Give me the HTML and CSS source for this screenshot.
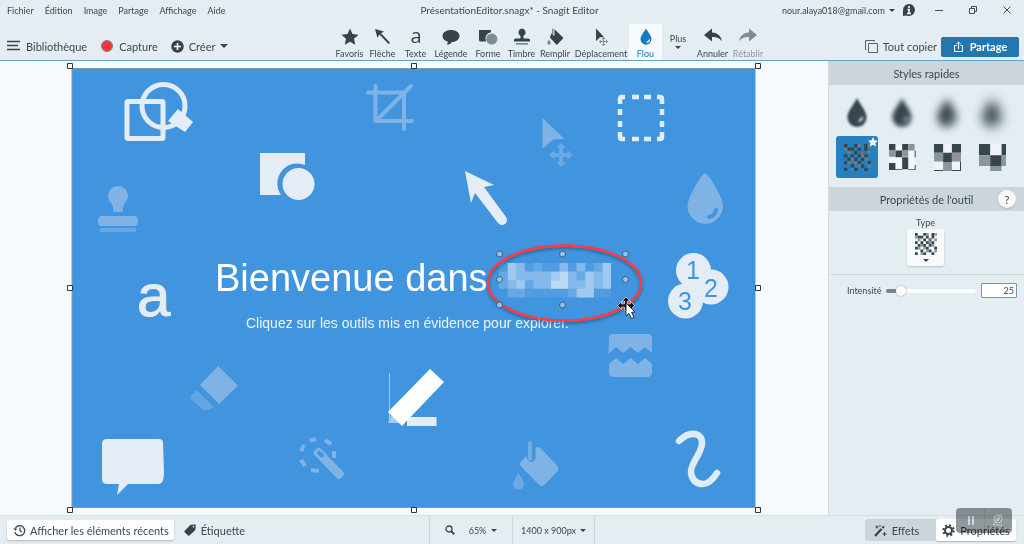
FILE: index.html
```html
<!DOCTYPE html>
<html lang="fr">
<head>
<meta charset="utf-8">
<title>PrésentationEditor.snagx* - Snagit Editor</title>
<link rel="stylesheet" href="styles.css">
</head>
<body>
<header class="header">
  <div class="titlebar">
    <nav class="menu">
      <button>Fichier</button><button>Édition</button><button>Image</button><button>Partage</button><button>Affichage</button><button>Aide</button>
    </nav>
    <div class="title">PrésentationEditor.snagx* - Snagit Editor</div>
    <div class="window-tools">
      <button class="account">nour.alaya018@gmail.com <span class="caret small-caret"></span></button>
      <button class="win" aria-label="Informations"><svg width="14" height="14" viewBox="0 0 14 14"><path d="M7 1a6 6 0 1 1-2.500 11.500L1 13V7A6 6 0 0 1 7 1z" fill="#37434b"/><path d="M7 3v2M5.500 6.500H7V10M5 10.500h4" stroke="#fff" stroke-width="1.600" fill="none"/></svg></button>
      <button class="win" aria-label="Réduire"><svg width="10" height="10" viewBox="0 0 10 10"><path d="M1 5.500h8" stroke="#414d55"/></svg></button>
      <button class="win" aria-label="Restaurer"><svg width="10" height="10" viewBox="0 0 10 10" fill="none" stroke="#414d55"><path d="M1.500 3.500h5v5h-5zM3.500 3V1.500h5v5H7"/></svg></button>
      <button class="win" aria-label="Fermer"><svg width="10" height="10" viewBox="0 0 10 10"><path d="M1.500 1.500l7 7M8.500 1.500l-7 7" stroke="#414d55"/></svg></button>
    </div>
  </div>
  <div class="toolbar">
    <div class="group">
      <button class="action"><svg width="14" height="12" viewBox="0 0 14 12"><path d="M0 1.500h13M0 5.500h11M0 9.500h13" stroke="#37434b" stroke-width="1.500"/></svg>Bibliothèque</button>
      <button class="action"><svg width="14" height="14" viewBox="0 0 14 14"><circle cx="7" cy="7" r="5.500" fill="#fb3438" stroke="#77838a"/></svg>Capture</button>
      <button class="action"><svg width="13" height="13" viewBox="0 0 13 13"><circle cx="6.500" cy="6.500" r="6.200" fill="#37434b"/><path d="M6.500 3v7M3 6.500h7" stroke="#fff" stroke-width="1.600"/></svg>Créer <span class="caret"></span></button>
    </div>
    <div class="tools">
      <button class="tool"><svg viewBox="0 0 22 20"><path d="M11 1.500l2.500 5.600 6.100.6-4.600 4.100 1.300 6L11 14.700l-5.300 3.100 1.300-6L2.400 7.700l6.100-.6z"/></svg>Favoris</button>
      <button class="tool"><svg viewBox="0 0 22 20"><path d="M3 2l9 2.500-3 1.700 9 9.500-1.400 1.300-9.200-9.400L5.500 11z"/></svg>Flèche</button>
      <button class="tool"><svg viewBox="0 0 22 20"><text x="11" y="16" text-anchor="middle" class="letter-icon">a</text></svg>Texte</button>
      <button class="tool"><svg viewBox="0 0 22 20"><path d="M11 3c5 0 8.500 2.600 8.500 6s-3.500 6-7.500 6c-.8 1.600-3 2.600-5.200 2.700.8-.8 1-2 .8-3.200C4.500 13.700 2.500 11.700 2.500 9c0-3.400 3.500-6 8.500-6z"/></svg>Légende</button>
      <button class="tool"><svg viewBox="0 0 22 20"><path d="M2 3h12v2.200a6.500 6.500 0 0 0-5 9.300H3.500A1.500 1.500 0 0 1 2 13z"/><circle cx="14.800" cy="12" r="5.600" fill="#7f8b91"/></svg>Forme</button>
      <button class="tool"><svg viewBox="0 0 22 20"><path d="M11 1.500a3.700 3.700 0 0 1 2 6.700c-.6.600-.7 2-.3 3.300h4.800a1.500 1.500 0 0 1 1.500 1.500v1.500H3V13a1.500 1.500 0 0 1 1.500-1.500h4.800c.4-1.300.3-2.700-.3-3.300a3.700 3.700 0 0 1 2-6.700z"/><path d="M5 16h12v1.700H5z" fill="#7f8b91"/></svg>Timbre</button>
      <button class="tool"><svg viewBox="0 0 22 20"><path d="M9 3v5.500h1.500V2.300L19.500 11l-6.700 7-7-7.500z"/><path d="M8 1.500h1.500v6H8zM5 12.500c1.200 1.800 1.800 2.500 1.800 3.500a1.800 1.800 0 0 1-3.600 0c0-1 .6-1.700 1.800-3.500z" fill="#7f8b91"/></svg>Remplir</button>
      <button class="tool"><svg viewBox="0 0 22 20"><path d="M6 1.500l8 8.500-4 .2L6 14z"/><path d="M13.500 10l2 2H14v2h2v-1.500l2 2-2 2V15h-2v2h1.500l-2 2-2-2H13v-2h-2v1.500l-2-2 2-2V14h2v-2h-1.500z" fill="#7f8b91"/></svg>Déplacement</button>
      <button class="tool active"><svg viewBox="0 0 22 20"><path d="M11 1.500c3 5 5.500 7.500 5.500 10.700a5.500 5.500 0 0 1-11 0C5.500 9 8 6.500 11 1.500z" fill="#1979c1"/><path d="M14.500 12.500a3 3 0 0 1-3 2.700" stroke="#fff" stroke-width="1.300" fill="none"/></svg>Flou</button>
      <button class="tool more">Plus<span class="caret small-caret"></span></button>
      <button class="tool"><svg viewBox="0 0 22 20"><path d="M2 8l8-6.500v4c6 .3 9.300 4 10 9-2.500-3.400-5-4.500-10-4.500v4.500z"/></svg>Annuler</button>
      <button class="tool muted"><svg viewBox="0 0 22 20"><path d="M20 8l-8-6.500v4C6 5.800 2.700 9.500 2 14.500 4.500 11.100 7 10 12 10v4.500z"/></svg>Rétablir</button>
    </div>
    <div class="group right">
      <button class="action copy"><svg width="13" height="13" viewBox="0 0 13 13" fill="none" stroke="#56626a"><path d="M3.500 3.500h9v9h-9zM1.500 9.500h-1v-9h9v1"/></svg>Tout copier</button>
      <button class="share"><svg width="11" height="12" viewBox="0 0 11 12" fill="none" stroke="#fff"><path d="M3.500 4.500h-2v6h8v-6h-2M5.500 8V1M3.300 3.200l2.200-2.200 2.200 2.200"/></svg>Partage</button>
    </div>
  </div>
</header>

<main class="main">
  <section class="workspace" aria-label="Canevas">
    <svg class="artwork" viewBox="72 68 684 440">
      <defs>
        <filter id="shadow" x="-10%" y="-10%" width="120%" height="130%"><feDropShadow dx="0" dy="2" stdDeviation="1.500" flood-color="#123" flood-opacity=".45"/></filter>
      </defs>
      <path d="M72 68h684v440H72z" fill="#4194de"/>
      <path d="M72 508V68.500h684M72 507.500h684" fill="none" stroke="#8299ab"/>
      <path d="M755.500 68v440" stroke="#a9cdef"/>
      <g fill="none" stroke="#e4edf5">
        <rect x="127" y="101.500" width="36" height="37" rx="1" stroke-width="5"/>
        <circle cx="163.500" cy="106" r="21.500" stroke-width="5"/>
      </g>
      <path d="M178 109l15 13-8 10-17-11z" fill="#e4edf5"/>
      <path d="M260 153h45v12a20 20 0 0 0-24 30h-21z" fill="#e4edf5"/>
      <circle cx="298.500" cy="184" r="16" fill="#e4edf5"/>
      <g fill="#7fb3e6">
        <path d="M118 186a10 10 0 0 1 6.500 17.500q-2 3-2 8.500h-9q0-5.500-2-8.500A10 10 0 0 1 118 186z"/>
        <rect x="98" y="216" width="40" height="10" rx="4"/>
        <rect x="100" y="228" width="36" height="4" rx="1" opacity=".6"/>
        <path d="M542.500 118l22 21-11 .5-11 9z"/>
        <path opacity=".65" d="M561 143l5 5h-3v5h4.500v-3l5.500 5-5.500 5v-3H563v5h3l-5 5-5-5h3v-5h-4.500v3l-5.500-5 5.500-5v3h4.500v-5h-3z"/>
        <path d="M705 173c3 0 18 24 18 33a17.700 17.700 0 0 1-35.500 0c0-9 15-33 17.500-33z"/>
        <path d="M218 366l20 19.500L219 404l-19-19z"/>
        <path opacity=".55" d="M196.500 390l17.500 17-5 3h-6L191 399q-1-2 0-3z"/>
        <path d="M609 338q0-4 4-4h35q4 0 4 4v15l-7-6-7 6-7.500-6-7.500 6-7-6-7.500 7zM609 364l7-6 7 6 7.500-6 7.500 6 7-6 7 6v8q0 5-5 5h-33q-5 0-5-5z"/>
        <rect x="314" y="449" width="9" height="38" rx="3" transform="rotate(-44 318 453)"/>
        <path d="M535.500 448q2-2 5 0l17 18q2 3 0 5l-13 14q-3 2-5 0l-18-18q-3-3 0-6l5-5q1 6 4 6 5 0 5-6z"/>
        <rect x="528" y="441" width="4" height="20" rx="2" opacity=".75"/>
        <path opacity=".7" d="M518.500 473q5.500 8 5.500 11a5.500 5.500 0 0 1-11 0q0-3 5.500-11z"/>
      </g>
      <path d="M709 217q6-1 7-7" fill="none" stroke="#4194de" stroke-width="4" stroke-linecap="round"/>
      <rect x="317" y="452" width="4" height="7" rx="1" fill="#4194de" transform="rotate(-44 318 453)"/>
      <g fill="none" stroke="#7fb3e6" stroke-width="4" stroke-linecap="round" stroke-linejoin="round">
        <path d="M368 92.500h36V129M375.500 86v35H412M377 120l34-34"/>
      </g>
      <path d="M310 440.500l6-1.500M325 440l6 4M334 451v7M301 451l3-6M301 460l4 6M311 470l8 1" fill="none" stroke="#7fb3e6" stroke-width="4"/>
      <path d="M625 97h-3q-2 0-2 2v5M657 97h3q2 0 2 2v5M625 139h-3q-2 0-2-2v-5M657 139h3q2 0 2-2v-5M632 97h7M644 97h7M632 139h7M644 139h7M620 109v6M620 121v6M662 109v6M662 121v6" fill="none" stroke="#e4edf5" stroke-width="4.500"/>
      <path d="M465 171l29 14-10 2 22 30a5 5 0 0 1-8 6l-23-30-4 10z" fill="#e4edf5"/>
      <path d="M102 444q0-5 5-5h52q4 0 4 4l1 33q0 8-5 8h-31l-10 4-2 0-1 0z" fill="none"/>
      <path d="M102 444q0-5 5-5h52q4 0 4 4l1 29q0 12-5 12h-31l-11 11 2-11h-12q-5 0-5-5z" fill="#e4edf5"/>
      <path d="M389.500 373v50" stroke="#8bd3fb"/>
      <path d="M388 423l4-10 8 10z" fill="#a9cbed"/>
      <path d="M407 417h29.500v9H407z" fill="#e4edf5"/>
      <path d="M430 369l14 13-42 44-14-14z" fill="#fff"/>
      <path d="M679 441q10-10 19-6 8 5 0 20-8 13-7 18 2 11 12 11 7 0 14-11" fill="none" stroke="#dfebf6" stroke-width="6.500" stroke-linecap="round"/>
      <text x="137" y="316" class="art-letter">a</text>
      <text x="215" y="291" class="art-title">Bienvenue dans</text>
      <text x="246" y="328" class="art-subtitle">Cliquez sur les outils mis en évidence pour explorer.</text>
      <g fill="#e4edf5"><circle cx="693.500" cy="270.500" r="17.500"/><circle cx="711" cy="287" r="17.500"/><circle cx="685.500" cy="301" r="17.500"/></g>
      <g class="art-step"><text x="693" y="279">1</text><text x="711" y="297">2</text><text x="685" y="310">3</text></g>
      <g transform="translate(499 263) scale(8.620)" fill="none" stroke="#fff">
        <path opacity=".08" d="M0 .5h1M3 .5h1M5 .5h2M8 .5h1M10 .5h1M3 3.500h5M11 3.500h2"/>
        <path opacity=".2" d="M4 .5h1M0 1.500h1M9 1.500h1M0 2.500h1M3 2.500h1M1 3.500h2M8 3.500h1M11 .5h1"/>
        <path opacity=".36" d="M2 .5h1M7 .5h1M9 .5h1M2 1.500h4M8 1.500h1M11 1.500h1M1 2.500h1M4 2.500h2M8 2.500h2M11 2.500h1"/>
        <path opacity=".5" d="M1 .5h1M12 .5h1M1 1.500h1M6 1.500h1M10 1.500h1M12 1.500h1M2 2.500h1M10 2.500h1M12 2.500h1M9 3.500h2"/>
        <path opacity=".65" d="M7 1.500h1M6 2.500h2"/>
      </g>
      <ellipse cx="564.500" cy="283" rx="76.500" ry="37.500" fill="none" stroke="#f93c42" stroke-width="2.500" filter="url(#shadow)"/>
      <g fill="#8ec5f3" stroke="#3a5f80">
        <circle cx="499.500" cy="254" r="3"/><circle cx="562.500" cy="254" r="3"/><circle cx="625.500" cy="254" r="3"/>
        <circle cx="499.500" cy="279.500" r="3"/><circle cx="625.500" cy="279.500" r="3"/>
        <circle cx="499.500" cy="305" r="3"/><circle cx="562.500" cy="305" r="3"/>
      </g>
      <path d="M626 297l4 4h-2.500v3h3v-2.500l4 4-4 4V307h-3v3h-3v-3h-3v2.500l-4-4 4-4v2.500h3v-3H622z" fill="#111" stroke="#fff" stroke-width=".6"/>
      <path d="M626 303v13l3-2.500 2.500 5 2.500-1.200-2.500-5 3.500-.3z" fill="#fff" stroke="#222" stroke-width=".9"/>
      <g fill="#fff" stroke="#2e3438">
        <path d="M67.500 63.500h5v5h-5zM411.500 63.500h5v5h-5zM755.500 63.500h5v5h-5zM67.500 285.500h5v5h-5zM755.500 285.500h5v5h-5zM67.500 507.500h5v5h-5zM411.500 507.500h5v5h-5zM755.500 507.500h5v5h-5z"/>
      </g>
    </svg>
  </section>

  <aside class="sidebar">
    <h2 class="panel-title">Styles rapides</h2>
    <div class="styles">
      <button class="style" aria-label="Flou léger"><svg class="blur-1" viewBox="0 0 28 28"><use href="#drop"/></svg></button>
      <button class="style" aria-label="Flou moyen"><svg class="blur-2" viewBox="0 0 28 28"><use href="#drop"/></svg></button>
      <button class="style" aria-label="Flou fort"><svg class="blur-3" viewBox="0 0 28 28"><use href="#drop"/></svg></button>
      <button class="style" aria-label="Flou maximal"><svg class="blur-4" viewBox="0 0 28 28"><use href="#drop"/></svg></button>
      <button class="style selected" aria-label="Pixellisation fine"><svg viewBox="0 0 8 8"><use href="#fine"/></svg>
        <svg class="star" viewBox="0 0 10 10"><path d="M5 0l1.500 3.300 3.500.4-2.600 2.300.7 3.600L5 7.800 1.900 9.600 2.600 6 0 3.700l3.500-.4z" fill="#f4f8fb"/></svg></button>
      <button class="style" aria-label="Pixellisation moyenne"><svg viewBox="0 0 80 80"><path d="M40 0h38v78H0V40h20V20H0" fill="#f4f7f9"/><path d="M0 0h19v19H0zM19 19h20v19H19zM39 0h18v19H39zM39 39h18v19H39zM19 39h20v-1H19zM0 56h19v21H0zM39 58h18v19H39zM19 77h60V62h-3v13H19zM76 20h3v20h-3z" fill="#37454e"/><path d="M57 0h19v19H57zM0 19h19v19H0zM39 19h18v19H39z" fill="#8a969c"/></svg></button>
      <button class="style" aria-label="Pixellisation forte"><svg viewBox="0 0 80 80"><path d="M27 0h26v26H27zM0 52h27v26H0zM53 52h26v26H53z" fill="#f0f4f7"/><path d="M0 0h27v26H0zM53 0h27v26H53zM27 26h26v27H27zM0 77h27v3H0zM53 77h24V52h3v28H53z" fill="#37454e"/><path d="M0 26h27v26H0zM53 26h27v26H53zM27 53h26v27H27z" fill="#8a969c"/></svg></button>
      <button class="style" aria-label="Pixellisation maximale"><svg viewBox="0 0 80 80"><path d="M33 0h34v33H33z" fill="#f0f4f7"/><path d="M0 0h33v33H0zM67 0h13v33H67zM33 33h34v32H33z" fill="#37454e"/><path d="M0 33h33v32H0zM67 33h13v32H67zM33 65h34v15H33z" fill="#8a969c"/></svg></button>
    </div>
    <div class="panel-title with-help"><h2>Propriétés de l'outil</h2><button class="help" aria-label="Aide">?</button></div>
    <div class="type">
      <span id="type-label">Type</span>
      <button class="type-button" aria-labelledby="type-label"><svg viewBox="0 0 8 8"><use href="#fine"/></svg><span class="caret small-caret"></span></button>
    </div>
    <div class="intensity">
      <label for="intensity">Intensité</label>
      <input id="intensity" class="slider" type="range" min="0" max="100" value="12">
      <input class="number" type="text" value="25" aria-label="Valeur de l'intensité">
    </div>
  </aside>
</main>

<footer class="statusbar">
  <div class="status-left">
    <button class="chip"><svg width="13" height="13" viewBox="0 0 13 13" fill="none" stroke="#414d55" stroke-width="1.300"><path d="M2.200 4.500a5 5 0 1 1-.3 3.500M7 3.500v3.300l2 1.200"/><path d="M.3 4.300l1.900 2.500 2.300-2z" fill="#414d55" stroke="none"/></svg>Afficher les éléments récents</button>
    <button class="plain"><svg width="12" height="12" viewBox="0 0 12 12"><path d="M6.500.8L11 .5q1 0 .8 1L11.300 6 5.500 11.500q-.8.600-1.500 0L.7 8.200q-.7-.8 0-1.500z" fill="#37434b"/><circle cx="9.500" cy="2.600" r=".9" fill="#e4edf2"/></svg>Étiquette</button>
  </div>
  <div class="status-center">
    <button class="zoom"><svg width="10" height="10" viewBox="0 0 10 10" fill="none" stroke="#37434b"><circle cx="4" cy="4" r="3" stroke-width="1.300"/><path d="M6.200 6.200L9.300 9.300" stroke-width="1.800"/></svg><span>65%</span><span class="caret small-caret"></span></button>
    <button class="size">1400 x 900px<span class="caret small-caret"></span></button>
  </div>
  <div class="status-right">
    <div class="tabs">
      <button class="tab"><svg width="13" height="13" viewBox="0 0 13 13"><path d="M1 12l6.500-7" stroke="#37434b" stroke-width="2.200"/><path d="M8.500 4.200l1.500-1.800" stroke="#37434b" stroke-width="2"/><path d="M3 1.500v3M1.500 3h3M10.500 8v4M8.500 10h4M6 1v2" stroke="#37434b"/></svg>Effets</button>
      <button class="tab on"><svg width="13" height="13" viewBox="0 0 13 13" fill="none" stroke="#37434b"><circle cx="6.500" cy="6.500" r="3.500" stroke-width="2"/><circle cx="6.500" cy="6.500" r="5.200" stroke-width="2" stroke-dasharray="2 2.084"/></svg>Propriétés</button>
      <div class="recorder" aria-hidden="true">
        <svg width="56" height="25" viewBox="0 0 56 25"><path d="M13 8v9M17 8v9" stroke="#d3d7da" stroke-width="2"/><path d="M28.500 0v25" stroke="#868b8e"/><g fill="none" stroke="#c9ced1"><circle cx="42" cy="11" r="4"/><circle cx="42" cy="11" r="1.500"/><path d="M38 17h8M37 17l9-11"/></g></svg>
      </div>
    </div>
  </div>
</footer>

<svg class="symbols" aria-hidden="true">
  <symbol id="drop" viewBox="0 0 28 28"><path d="M14 1c2 5 9 12 9 18a9 9 0 0 1-18 0C5 13 12 6 14 1z" fill="#37454e"/><path d="M20 18q0 5-5 6 1-5 5-6z" fill="#b9c4ca"/></symbol>
  <symbol id="fine" viewBox="0 0 8 8">
    <g fill="none"><path d="M0 .5h1M3 .5h1M6 .5h1M1 1.500h2M4 1.500h1M6 1.500h1M3 2.500h1M5 2.500h1M0 3.500h1M2 3.500h1M4 3.500h1M6 3.500h1M1 4.500h1M3 4.500h1M5 4.500h1M0 5.500h1M4 5.500h1M7 5.500h1M2 6.500h1M5 6.500h1M0 7.500h1M6 7.500h1M3 7.500h1" stroke="#37454e"/>
    <path d="M4 .5h1M7 .5h1M0 1.500h1M5 2.500h1M1 2.500h1M7 2.500h1M5 3.500h1M2 4.500h1M6 4.500h1M1 5.500h1M3 5.500h1M4 6.500h1M7 6.500h1M2 7.500h1" stroke="#6d7f8b" opacity=".8"/></g>
  </symbol>
</svg>
</body>
</html>
```

FILE: styles.css
```css
* { box-sizing: border-box; }

body {
  margin: 0;
  height: 100vh;
  display: flex;
  flex-direction: column;
  overflow: hidden;
  background: #e4edf2;
  color: #3b4851;
  font-family: Lato, "Open Sans", sans-serif;
  font-size: 11px;
}

button {
  font: inherit;
  color: inherit;
  background: none;
  border: 0;
  padding: 0;
  display: flex;
  align-items: center;
  justify-content: center;
  white-space: nowrap;
}

svg { display: block; flex: none; }

.caret {
  border: 4px solid transparent;
  border-top-color: #37434b;
  border-bottom: 0;
}

.small-caret {
  border-width: 3px;
  border-bottom: 0;
}

.symbols { position: absolute; width: 0; height: 0; }

/* Header */
.header { border-bottom: 1px solid #5fa3cb; }

.titlebar {
  height: 24px;
  padding: 0 12px 4px 7px;
  display: grid;
  grid-template-columns: 1fr auto 1fr;
  align-items: center;
}

.title { font-size: 10px; }
.menu { display: flex; gap: 11px; font-size: 9px; }

.window-tools {
  display: flex;
  justify-content: flex-end;
  align-items: center;
  gap: 24px;
}

.account { font-size: 9px; gap: 4px; }
.account + .win { margin-left: -17px; margin-right: -6px; }

.toolbar {
  height: 36px;
  display: grid;
  grid-template-columns: 9fr auto 7fr;
}

.group {
  display: flex;
  align-items: center;
  gap: 13px;
  padding: 8px 0 0 7px;
}

.group.right { justify-content: flex-end; gap: 4px; padding: 9px 5px 0 0; }

.action { gap: 5px; }

.share {
  width: 78px;
  height: 20px;
  gap: 6px;
  border-radius: 2px;
  background: #2476b1;
  color: #fff;
  font-weight: 700;
}

.tools {
  display: grid;
  grid-template-columns: 33px 33px 33px 38px 36px 31px 36px 56px 33px 32px 37px 34px;
}

.tool {
  flex-direction: column;
  justify-content: flex-end;
  padding-bottom: 1px;
  font-size: 9px;
  line-height: 10px;
  gap: 2px;
}

.tool svg { width: 22px; height: 20px; fill: #37434b; overflow: visible; }
.tool.active { background: #f6fafc; color: #1979c1; }
.tool.more { justify-content: center; }
.tool.muted { color: #8b979d; }
.tool.muted svg { fill: #7f8b91; }
.letter-icon { font: 20px/20px "Open Sans", sans-serif; }

/* Canvas and side panel */
.main {
  flex: 1;
  min-height: 0;
  display: flex;
}

.workspace {
  flex: 1;
  min-width: 0;
  display: flex;
  align-items: center;
  justify-content: center;
  padding: 0 72px;
  background: #f6fafc;
  border-bottom: 1px solid #d5dee3;
}

.artwork { width: 100%; overflow: visible; }
.art-letter { font: 60px "Liberation Sans", Arial, sans-serif; fill: #e4edf5; stroke: #e4edf5; }
.art-title { font: 38px "Liberation Sans", Arial, sans-serif; fill: #fff; }
.art-subtitle { font: 14px "Liberation Sans", Arial, sans-serif; fill: #edf5fc; }
.art-step { font: 25px "Liberation Sans", Arial, sans-serif; fill: #4194de; text-anchor: middle; }

.sidebar {
  width: 196px;
  border-left: 1px solid #d3dde2;
  border-bottom: 1px solid #d5dee3;
}

.panel-title, .panel-title h2 {
  margin: 0;
  font-size: 11px;
  font-weight: 400;
}

.panel-title {
  height: 24px;
  display: flex;
  align-items: center;
  justify-content: center;
  background: #cbd5da;
}

.panel-title.with-help { position: relative; }

.help {
  position: absolute;
  right: 8px;
  width: 18px;
  height: 18px;
  border-radius: 50%;
  background: #f7f9fa;
  box-shadow: 0 1px 1px #aab4ba;
}

.styles {
  display: grid;
  grid-template-columns: repeat(4, 42px);
  justify-content: center;
  gap: 3px;
  padding: 6px 4px 9px 0;
}

.style { position: relative; height: 42px; border-radius: 3px; }
.style svg { width: 27px; height: 27px; }
.style.selected { background: #2580c0; }
.style .star { position: absolute; top: 1px; right: 0; width: 10px; height: 10px; }
.style .blur-1, .style .blur-2, .style .blur-3, .style .blur-4 { width: 30px; height: 30px; overflow: visible; }
.blur-1 { filter: blur(1px); }
.blur-2 { filter: blur(2px); }
.blur-3 { filter: blur(4px); }
.blur-4 { filter: blur(6px); }

.type {
  display: flex;
  flex-direction: column;
  align-items: center;
  gap: 1px;
  padding: 7px 2px 8px 0;
  font-size: 9px;
  line-height: 10px;
  border-bottom: 1px solid #d0dae0;
}

.type-button {
  width: 37px;
  height: 37px;
  flex-direction: column;
  gap: 4px;
  border-radius: 2px;
  background: #f8fafb;
  box-shadow: 0 1px 2px #b7c1c7;
}

.type-button svg { width: 22px; height: 22px; }

.intensity {
  display: flex;
  align-items: center;
  gap: 5px;
  padding: 8px 7px 0 18px;
  font-size: 9px;
}

.slider {
  appearance: none;
  flex: 1;
  min-width: 0;
  height: 4px;
  margin: 0;
  border-radius: 2px;
  background: linear-gradient(90deg, #76868f 14%, #fafcfd 14%);
}

.slider::-webkit-slider-thumb {
  appearance: none;
  width: 10px;
  height: 10px;
  border-radius: 50%;
  background: #fdfdfd;
  box-shadow: 0 0 2px #8b979d;
}

.number {
  width: 36px;
  height: 15px;
  padding: 0 2px;
  border: 1px solid #7595a8;
  border-radius: 1px;
  background: #fff;
  color: inherit;
  font: inherit;
  text-align: right;
}

/* Status bar */
.statusbar {
  height: 28px;
  display: grid;
  grid-template-columns: 1fr auto 1fr;
  align-items: center;
}

.status-left { display: flex; gap: 10px; padding-left: 7px; }

.chip, .plain { height: 20px; gap: 5px; }

.chip {
  gap: 4px;
  padding: 0 5px 0 6px;
  border-radius: 2px;
  background: #fff;
  box-shadow: 0 1px 2px #aeb9c0;
}

.status-center {
  align-self: stretch;
  display: flex;
  border: solid #ccd7dd;
  border-width: 0 1px;
  font-size: 9px;
}

.zoom { width: 82px; gap: 5px; }
.zoom svg { margin-right: 9px; }
.size { width: 82px; gap: 4px; border-left: 1px solid #ccd7dd; }

.status-right { display: flex; justify-content: flex-end; padding-right: 8px; }

.tabs {
  position: relative;
  display: flex;
  height: 22px;
  border-radius: 2px;
  background: #cbd5da;
}

.tab { gap: 5px; width: 71px; padding-right: 8px; }

.tab.on {
  width: 80px;
  padding: 0;
  border-radius: 2px;
  background: #fff;
  box-shadow: 0 1px 1px #aeb9c0;
}

.recorder {
  position: absolute;
  right: 4px;
  bottom: 8px;
  border-radius: 4px;
  overflow: hidden;
  background: #92979a;
  mix-blend-mode: multiply;
}
```
